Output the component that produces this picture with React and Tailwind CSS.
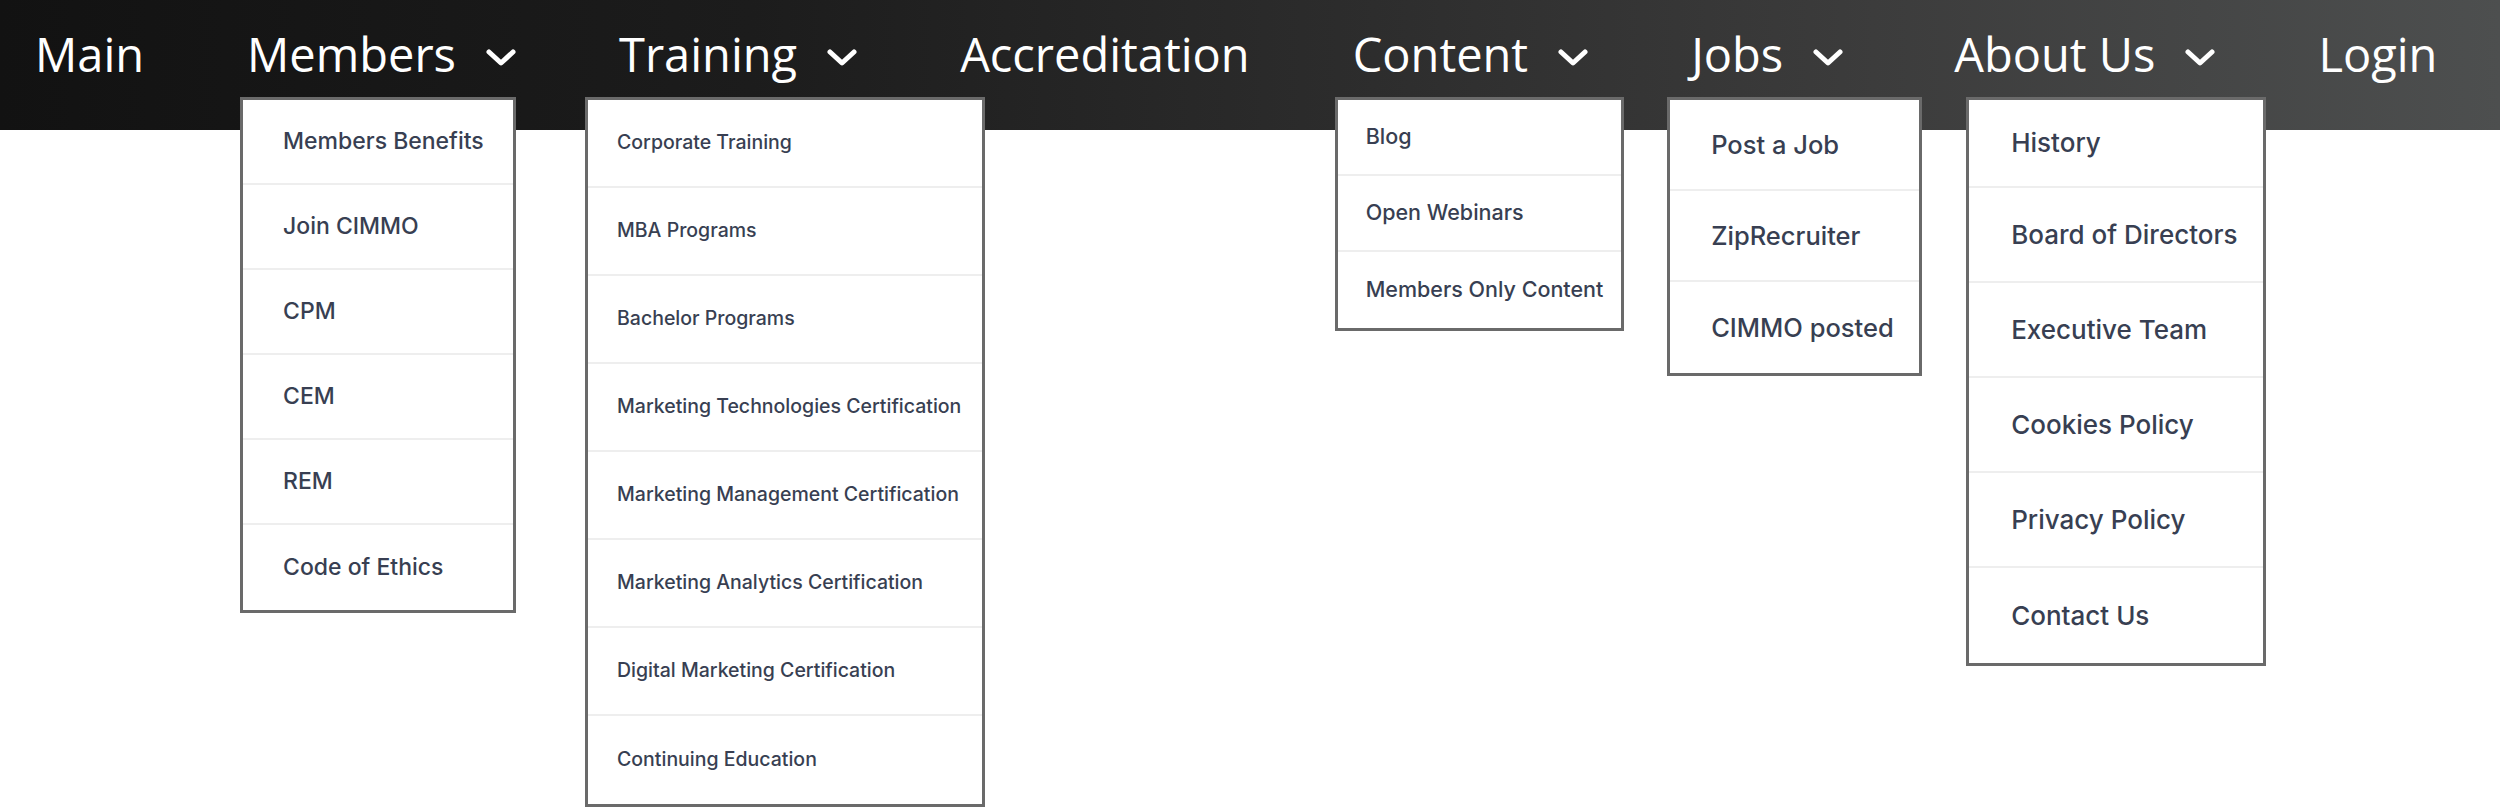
import React from 'react';

// nav items with their hanging menus
const navItems = [
  { label: 'Main' },
  {
    label: 'Members',
    menu: {
      box: 'left-[-7px] w-[276px]',
      row: 'h-[85px]',
      size: 'text-[23px]',
      pad: 'pl-[40px]',
      items: ['Members Benefits', 'Join CIMMO', 'CPM', 'CEM', 'REM', 'Code of Ethics'],
    },
  },
  {
    label: 'Training',
    menu: {
      box: 'left-[-34px] w-[400px]',
      row: 'h-[88px]',
      size: 'text-[19.5px]',
      pad: 'pl-[29px]',
      items: [
        'Corporate Training',
        'MBA Programs',
        'Bachelor Programs',
        'Marketing Technologies Certification',
        'Marketing Management Certification',
        'Marketing Analytics Certification',
        'Digital Marketing Certification',
        'Continuing Education',
      ],
    },
  },
  { label: 'Accreditation' },
  {
    label: 'Content',
    menu: {
      box: 'left-[-18px] w-[289px]',
      row: 'h-[76px]',
      size: 'text-[21.5px]',
      pad: 'pl-[28px]',
      items: ['Blog', 'Open Webinars', 'Members Only Content'],
    },
  },
  {
    label: 'Jobs',
    menu: {
      box: 'left-[-24px] w-[255px]',
      row: 'h-[91px]',
      size: 'text-[25.5px]',
      pad: 'pl-[41px]',
      items: ['Post a Job', 'ZipRecruiter', 'CIMMO posted'],
    },
  },
  {
    label: 'About Us',
    shift: 'ml-[8px]',
    menu: {
      box: 'left-[12px] w-[300px]',
      row: 'h-[95px]',
      first: 'h-[88px]',
      size: 'text-[26px]',
      pad: 'pl-[42px]',
      items: ['History', 'Board of Directors', 'Executive Team', 'Cookies Policy', 'Privacy Policy', 'Contact Us'],
    },
  },
  { label: 'Login' },
];

const Chevron = () => (
  <svg width="30" height="18" viewBox="0 0 30 18" className="ml-[30px] mt-[18px] shrink-0">
    <polyline
      points="3,3 15,14 27,3"
      fill="none"
      stroke="white"
      strokeWidth="5"
      strokeLinecap="round"
      strokeLinejoin="round"
    />
  </svg>
);

const Dropdown = ({ menu }) => (
  <div
    className={`absolute top-[97px] ${menu.box} bg-white border-[3px] border-[#6a6a6a] z-10`}
    style={{ fontFamily: 'Inter, "Noto Sans", sans-serif' }}
  >
    {menu.items.map((item, i) => (
      <div
        key={item}
        className={`flex items-center ${i === 0 && menu.first ? menu.first : menu.row} ${menu.size} ${menu.pad} font-medium text-[#383f52] leading-none whitespace-nowrap ${
          i < menu.items.length - 1 ? 'border-b-2 border-[#eeeeee]' : ''
        }`}
      >
        {item}
      </div>
    ))}
  </div>
);

export default function App() {
  return (
    <div className="min-h-[812px] w-[2500px] bg-white overflow-hidden">
      <nav
        className="h-[130px] flex items-start gap-[103px] pl-[35px] bg-[linear-gradient(90deg,#121212_0%,#1c1c1c_30%,#2d2d2d_55%,#3c3c3c_75%,#4d4f4f_100%)]"
        style={{ fontFamily: '"Open Sans", "Noto Sans", sans-serif' }}
      >
        {navItems.map((item) => (
          <div key={item.label} className={`relative h-[130px] pt-[31px] flex items-start ${item.shift || ''}`}>
            <span className="text-[47px] leading-none text-white whitespace-nowrap">{item.label}</span>
            {item.menu && <Chevron />}
            {item.menu && <Dropdown menu={item.menu} />}
          </div>
        ))}
      </nav>
    </div>
  );
}
